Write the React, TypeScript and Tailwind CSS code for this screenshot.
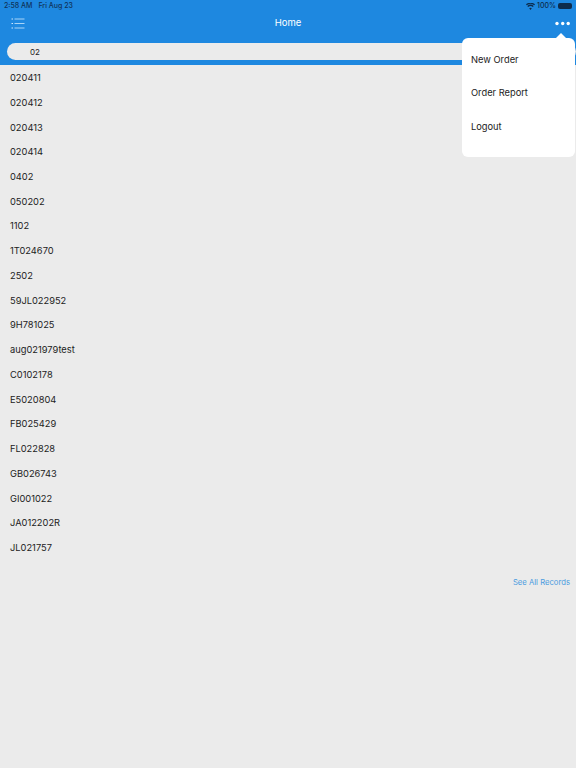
const rows = ["020411","020412","020413","020414","0402","050202","1102","1T024670","2502","59JL022952","9H781025","aug021979test","C0102178","E5020804","FB025429","FL022828","GB026743","GI001022","JA012202R","JL021757"];

export default function App() {
  return (
    <div className="relative w-[576px] h-[768px] overflow-hidden bg-[#ebebeb] font-['Inter',sans-serif] text-[#222]">
      <div className="bg-[#1e88e0] h-[65px] flex flex-col">
        <div className="h-[12px] pl-[4px] pr-[4px] flex items-center justify-between text-[7px] font-medium text-[#10335a]">
          <div className="flex gap-[6px]"><span>2:58 AM</span><span>Fri Aug 23</span></div>
          <div className="flex items-center gap-[2px] text-[#0d2c4d]">
            <svg width="9" height="7" viewBox="0 0 24 18" fill="currentColor"><path d="M12 18 8.5 13.5a5.5 5.5 0 0 1 7 0zM5.8 10.5 3.4 7.6a13 13 0 0 1 17.2 0l-2.4 2.9a9.4 9.4 0 0 0-12.4 0zM2 5.9 0 3.2a18.5 18.5 0 0 1 24 0l-2 2.7a15.5 15.5 0 0 0-20 0z"/></svg>
            <span>100%</span>
            <div className="w-[14px] h-[6px] rounded-[2px] bg-[#0d2c4d]" />
          </div>
        </div>
        <div className="h-[23px] relative flex items-center justify-center text-white text-[9.5px]">
          <svg className="absolute left-[11px] top-[5px]" width="14" height="13" viewBox="0 0 14 13" fill="none" stroke="#a9d4f7" strokeWidth="1">
            <path d="M3.5 2H13.5M3.5 6.5H13.5M3.5 11H13.5" />
            <path d="M0.5 2H2M0.5 6.5H2M0.5 11H2" stroke="#cfe6fa" />
          </svg>
          <span>Home</span>
          <svg className="absolute right-[6px] top-[9px]" width="15" height="5" viewBox="0 0 15 5" fill="#fff">
            <circle cx="2" cy="2.5" r="1.7" />
            <circle cx="7.7" cy="2.5" r="1.7" />
            <circle cx="13.2" cy="2.5" r="1.7" />
          </svg>
        </div>
        <div className="pl-[7px] pt-[8px]">
          <div className="h-[17px] rounded-full bg-[#ebebeb] pl-[23px] flex items-center text-[8px] text-[#222]">02</div>
        </div>
      </div>

      <div className="flex flex-col pt-[0.7px]">
        {rows.map((r) => (
          <div key={r} className="h-[24.74px] pl-[10px] flex items-center text-[9.3px] text-[#222]">{r}</div>
        ))}
      </div>
      <div className="flex justify-end pr-[6px] mt-[16.5px] text-[7.7px] text-[#4a9be0]">See All Records</div>

      <div className="absolute left-[462px] top-[38px] w-[113px] h-[119px] rounded-[6px] bg-white pt-[14.5px] text-[9.3px] text-[#222]">
        <div className="absolute right-[8px] top-[-5px] w-0 h-0 border-l-[6px] border-r-[6px] border-b-[6px] border-l-transparent border-r-transparent border-b-white" />
        <div className="h-[33.7px] pl-[9px]">New Order</div>
        <div className="h-[33.7px] pl-[9px]">Order Report</div>
        <div className="h-[33.7px] pl-[9px]">Logout</div>
      </div>
    </div>
  );
}
